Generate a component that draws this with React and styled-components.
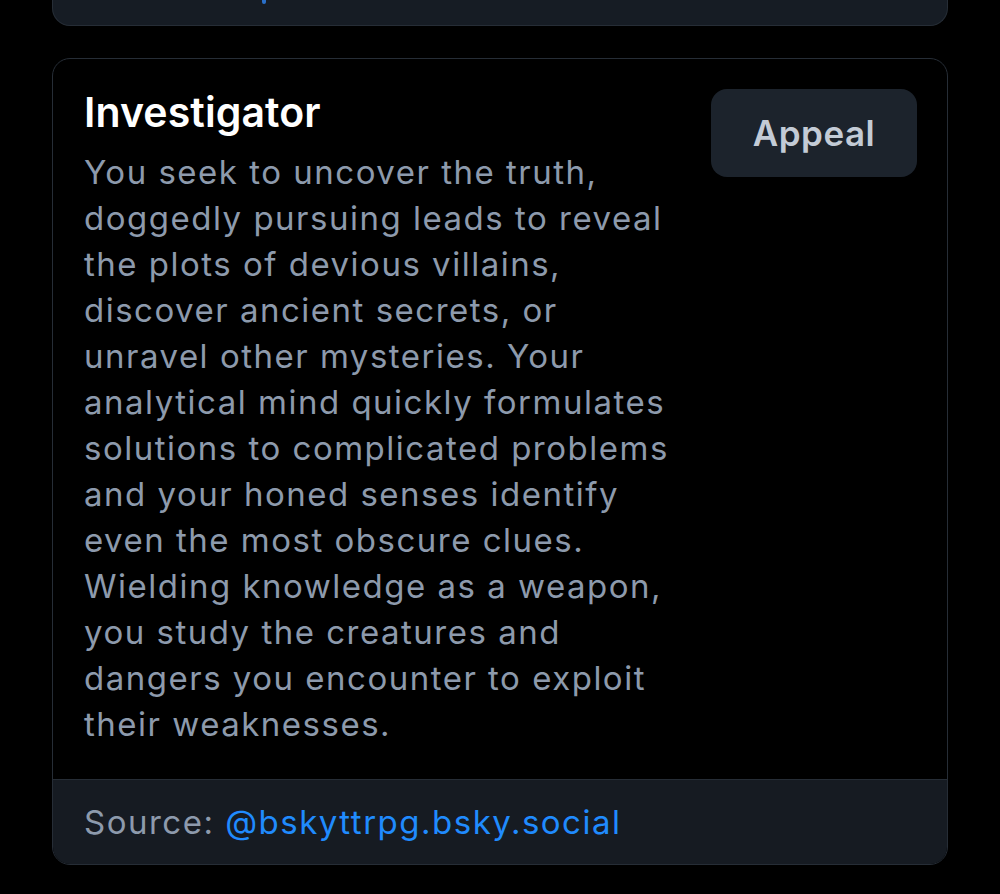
import styled, { createGlobalStyle } from "styled-components";

const GlobalStyle = createGlobalStyle`
  html, body {
    margin: 0;
    padding: 0;
    background: #000000;
  }
  body {
    font-family: Inter, "Noto Sans", "Liberation Sans", sans-serif;
    -webkit-font-smoothing: antialiased;
  }
`;

const Page = styled.main`
  width: 1000px;
  height: 894px;
  overflow: hidden;
  padding: 0 52px;
  box-sizing: border-box;
  display: flex;
  flex-direction: column;
  gap: 32px;
`;

const PrevCard = styled.div`
  height: 26px;
  box-sizing: border-box;
  background: #161c24;
  border: 1px solid #262d36;
  border-top: none;
  border-radius: 0 0 18px 18px;
  padding-left: 209px;
`;

const PrevMark = styled.span`
  display: block;
  width: 4px;
  height: 4px;
  border-radius: 0 0 2px 2px;
  background: #2a6fc9;
`;

const Card = styled.article`
  border: 1px solid #262d36;
  border-radius: 18px;
  overflow: hidden;
  background: #000000;
`;

const Body = styled.div`
  display: flex;
  align-items: flex-start;
  justify-content: space-between;
  padding: 30px 30px 32px 31px;
`;

const Text = styled.div`
  display: flex;
  flex-direction: column;
  gap: 14px;
`;

const Title = styled.h2`
  margin: 0;
  font-size: 41px;
  line-height: 46px;
  font-weight: 600;
  color: #ffffff;
  letter-spacing: 0.1px;
`;

const Description = styled.p`
  margin: 0;
  font-size: 33px;
  line-height: 46px;
  font-weight: 400;
  color: #8d9aac;
  letter-spacing: 1.5px;
`;

const Line = styled.span`
  display: block;
  white-space: nowrap;
`;

const AppealButton = styled.button`
  flex-shrink: 0;
  width: 206px;
  height: 88px;
  border: none;
  border-radius: 16px;
  background: #1c232c;
  color: #c3cbd6;
  font-family: inherit;
  font-size: 35px;
  font-weight: 600;
  letter-spacing: 0.5px;
  cursor: pointer;
`;

const Footer = styled.footer`
  background: #161b22;
  border-top: 1px solid #262d36;
  padding: 19px 31px;
  font-size: 33px;
  line-height: 46px;
  color: #8d9aac;
  letter-spacing: 1.5px;
`;

const Handle = styled.a`
  color: #208bfe;
  text-decoration: none;
`;

const lines = [
  "You seek to uncover the truth,",
  "doggedly pursuing leads to reveal",
  "the plots of devious villains,",
  "discover ancient secrets, or",
  "unravel other mysteries. Your",
  "analytical mind quickly formulates",
  "solutions to complicated problems",
  "and your honed senses identify",
  "even the most obscure clues.",
  "Wielding knowledge as a weapon,",
  "you study the creatures and",
  "dangers you encounter to exploit",
  "their weaknesses.",
];

export default function App() {
  return (
    <>
      <GlobalStyle />
      <Page>
        <PrevCard>
          <PrevMark />
        </PrevCard>
        <Card>
          <Body>
            <Text>
              <Title>Investigator</Title>
              <Description>
                {lines.map((line) => (
                  <Line key={line}>{line}</Line>
                ))}
              </Description>
            </Text>
            <AppealButton type="button">Appeal</AppealButton>
          </Body>
          <Footer>
            Source: <Handle href="#">@bskyttrpg.bsky.social</Handle>
          </Footer>
        </Card>
      </Page>
    </>
  );
}
